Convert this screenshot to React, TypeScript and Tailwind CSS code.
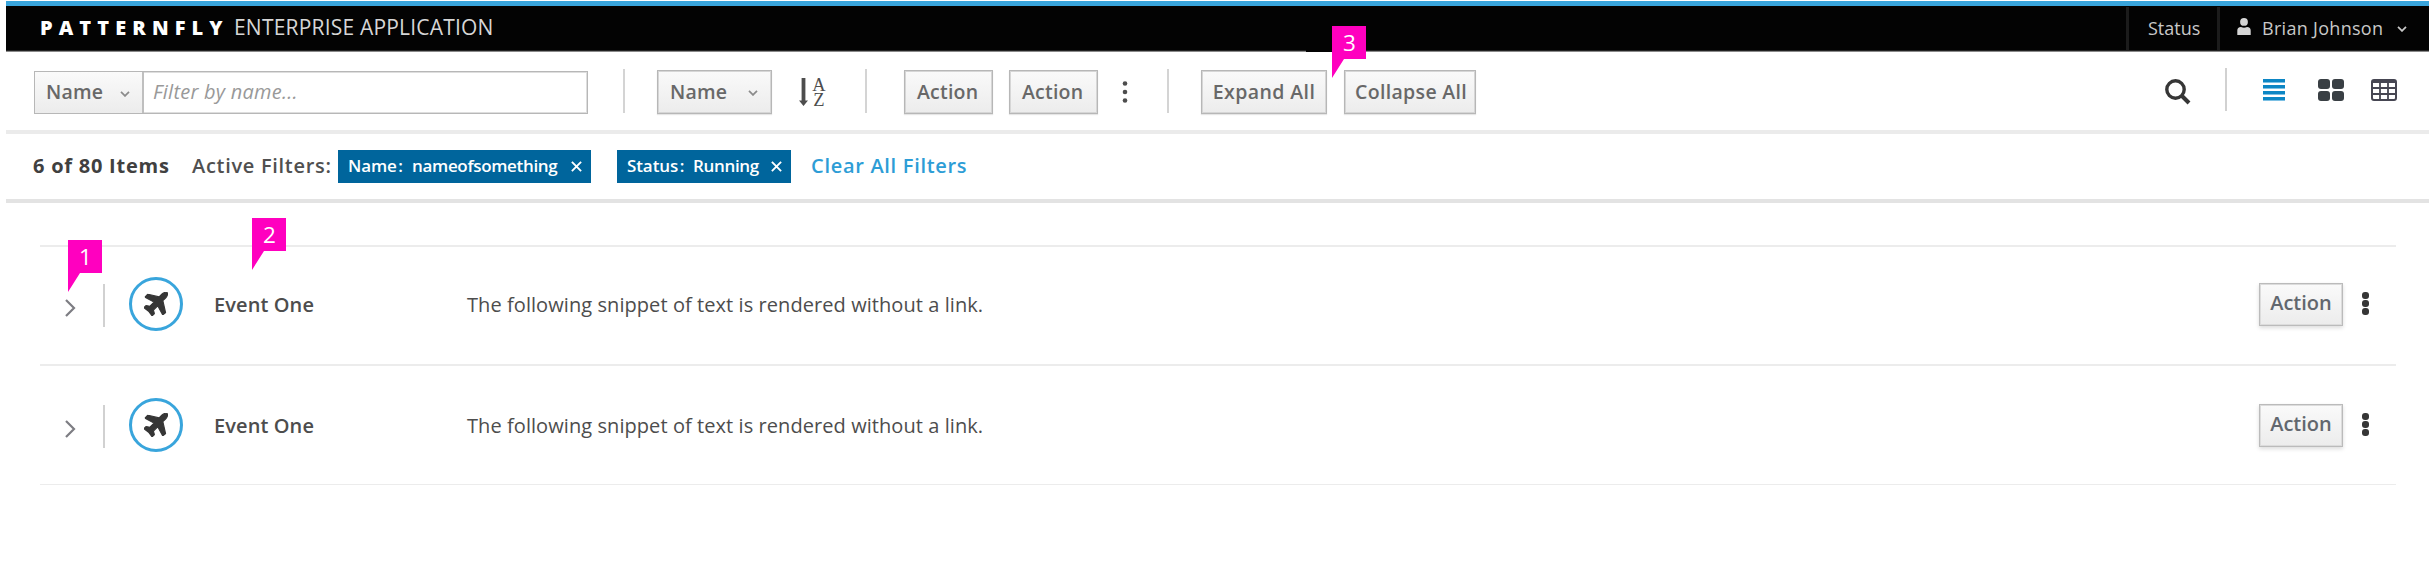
import type { ReactNode } from "react";

function Chevron({ className }: { className?: string }) {
  return (
    <svg viewBox="0 0 10 6" fill="none" stroke="currentColor" strokeWidth="1.7" className={`h-[6px] w-[10px] shrink-0 ${className ?? ""}`}>
      <path d="M1 0.8 5 4.9 9 0.8" />
    </svg>
  );
}

function Kebab({ className }: { className?: string }) {
  return (
    <svg viewBox="0 0 6 22" fill="currentColor" className={`h-[22px] w-[6px] shrink-0 ${className ?? ""}`}>
      <circle cx="3" cy="2.5" r="2.3" />
      <circle cx="3" cy="11" r="2.3" />
      <circle cx="3" cy="19.5" r="2.3" />
    </svg>
  );
}

function ToolButton({ className, children }: { className: string; children: ReactNode }) {
  return (
    <button
      className={`flex h-[44px] shrink-0 items-center border border-[#b7b7b7] bg-linear-to-b from-[#fafafa] to-[#ececec] text-[19.5px] font-semibold whitespace-nowrap text-[#686868] shadow-[inset_0_0_0_1px_#d6d6d6,0_1px_1px_#e6e6e6] ${className}`}
    >
      {children}
    </button>
  );
}

function Divider({ className }: { className: string }) {
  return <div className={`mb-[2px] h-[44px] w-[2px] shrink-0 bg-[#d4d4d4] ${className}`} />;
}

function Callout({ n, className }: { n: number; className: string }) {
  return (
    <div className={`absolute h-[52px] w-[34px] text-white ${className}`}>
      <svg viewBox="0 0 34 52" className="absolute inset-0 h-full w-full" fill="#ff00bf">
        <path d="M0 0H34V33H12L0 52Z" />
      </svg>
      <span className="relative block pl-[1px] text-center text-[22.5px] leading-[33px]">{n}</span>
    </div>
  );
}

function Chip({ label, value, className, labelClassName }: { label: string; value: string; className: string; labelClassName: string }) {
  return (
    <div className={`flex h-[33px] shrink-0 items-center bg-[#00659c] pl-[10px] text-[17px] font-semibold whitespace-nowrap text-white ${className}`}>
      <span className={`mb-[1px] tracking-[-0.1px] ${labelClassName}`}>
        {label}
        <span className="ml-[1.5px]">:</span>
      </span>
      <span className="mb-[1px] tracking-[-0.33px]">{value}</span>
      <svg viewBox="0 0 10 10" className="mr-[9px] mb-[1px] ml-auto h-[11px] w-[11px]" stroke="currentColor" strokeWidth="1.7" fill="none">
        <path d="M0.8 0.8 9.2 9.2M9.2 0.8 0.8 9.2" />
      </svg>
    </div>
  );
}

function Plane() {
  return (
    <svg viewBox="190 120 1420 1440" className="h-[24px] w-[24px]" fill="#363636" stroke="#363636" strokeWidth="70">
      <path d="M1568 160q44 52 12 148t-108 172l-161 161 160 696q5 19-12 33l-128 96q-7 6-19 6-4 0-7-1-15-3-21-16l-279-508-259 259 53 194q5 17-8 31l-96 96q-9 9-23 9h-2q-15-2-24-13l-189-252-252-189q-11-7-13-23-1-13 9-25l96-97q9-9 23-9 6 0 8 1l194 53 259-259-508-279q-14-8-17-24-2-16 9-27l128-128q14-13 30-8l665 159 160-160q76-76 172-108t148 12z" />
    </svg>
  );
}

function EventRow({ className }: { className: string }) {
  return (
    <div className={`flex items-center border-[#ececec] ${className}`}>
      <svg viewBox="0 0 11 18" className="mt-[7px] ml-[25px] h-[18px] w-[11px]" fill="none" stroke="#7d7d83" strokeWidth="2.2">
        <path d="M1 1 9 9 1 17" />
      </svg>
      <div className="mt-[3px] ml-[27px] h-[43px] w-[2px] bg-[#d1d1d1]" />
      <div className="ml-[24px] flex h-[54px] w-[54px] items-center justify-center rounded-full border-[3px] border-[#39a5dc]">
        <Plane />
      </div>
      <span className="mt-[2px] ml-[31px] w-[253px] text-[20px] font-semibold tracking-[0.1px] text-[#4d4d4d]">Event One</span>
      <span className="mt-[2px] text-[20px] tracking-[0.07px] text-[#4d4d4d]">The following snippet of text is rendered without a link.</span>
      <button className="mr-[19px] ml-auto flex h-[43px] w-[84px] items-center justify-center border-[1.5px] border-[#bbbbbb] bg-linear-to-b from-[#fafafa] to-[#ececec] pb-[2px] text-[20px] font-semibold text-[#62676e] shadow-[inset_0_0_0_1px_#dcdcdc,0_2px_4px_#dddddd]">
        Action
      </button>
      <div className="mr-[27px] mb-[2px] flex w-[7px] flex-col gap-[1px]">
        <i className="h-[7px] w-[7px] rounded-[3px] bg-[#363636]" />
        <i className="h-[7px] w-[7px] rounded-[3px] bg-[#363636]" />
        <i className="h-[7px] w-[7px] rounded-[3px] bg-[#363636]" />
      </div>
    </div>
  );
}

export default function App() {
  return (
    <div className="relative h-[575px] w-[2429px] overflow-hidden bg-white pt-[1px] pl-[6px] font-['Open_Sans',sans-serif]">
      <header className="flex h-[51px] border-t-[5px] border-b border-t-[#39a5dc] border-b-[#8a8a8a] bg-[#030303]">
        <div className="flex flex-1 items-center border-b border-[#222222] pl-[34px] whitespace-nowrap">
          <span className="w-[194px] text-[20px] font-extrabold tracking-[6.1px] text-white">PATTERNFLY</span>
          <span className="text-[21px] tracking-[0.2px] text-[#d6d6d6]">ENTERPRISE APPLICATION</span>
        </div>
        <nav className="flex items-center border-b border-[#222222] text-[18px] text-[#c8c8c8]">
          <div className="flex h-[43px] w-[91px] items-center border-l-[3px] border-[#1c1c1c] pl-[19px]">Status</div>
          <div className="flex h-[43px] w-[212px] items-center border-l-[3px] border-[#1c1c1c] pl-[17px]">
            <svg viewBox="0 0 14 17" className="mr-[11px] mb-[3px] h-[17px] w-[14px]" fill="#d6d6d6">
              <ellipse cx="7" cy="3.9" rx="3.9" ry="3.9" />
              <path d="M0.3 17V12.5Q0.3 9.3 4 9Q7 10.5 10 9Q13.7 9.3 13.7 12.5V17Z" />
            </svg>
            <span className="tracking-[0.3px]">Brian Johnson</span>
            <Chevron className="mt-[2px] ml-[14px]" />
          </div>
        </nav>
      </header>

      <div className="flex h-[82px] items-center border-b-[4px] border-[#ebebeb] pt-[2px] pl-[28px]">
        <div className="mt-px flex h-[43px] w-[554px] border border-[#b7b7b7] shadow-[inset_0_0_0_1px_#dedede]">
          <div className="flex w-[109px] items-center border-r-2 border-[#bfbfbf] bg-linear-to-b from-[#fafafa] to-[#ececec] pb-px pl-[11px] text-[19.5px] font-semibold tracking-[0.2px] text-[#686868]">
            Name
            <Chevron className="mt-[3px] ml-[17px] text-[#8b8b8b]" />
          </div>
          <input
            className="w-[400px] bg-transparent pb-px pl-[9px] text-[20px] tracking-[0.25px] italic outline-none placeholder:text-[#999999]"
            placeholder="Filter by name..."
          />
        </div>
        <Divider className="ml-[35px]" />
        <ToolButton className="ml-[32px] w-[115px] pl-[12px] tracking-[0.2px]">
          Name
          <Chevron className="mt-[2px] ml-[21px] text-[#8b8b8b]" />
        </ToolButton>
        <div className="ml-[27px] flex h-[30px] items-center text-[#4d4d4d]">
          <svg viewBox="0 0 9 28" className="h-[28px] w-[9px]" fill="currentColor">
            <path d="M2.6 0H6.4V22.4H9L4.5 28 0 22.4H2.6Z" />
          </svg>
          <div className="mt-[2px] ml-[4px] flex w-[14px] flex-col items-center font-['Liberation_Serif',serif] text-[18.5px] leading-[15.5px]">
            <span>A</span>
            <span>Z</span>
          </div>
        </div>
        <Divider className="ml-[39px]" />
        <ToolButton className="ml-[37px] w-[89px] pl-[12px] tracking-[0.2px]">Action</ToolButton>
        <ToolButton className="ml-[16px] w-[89px] pl-[12px] tracking-[0.2px]">Action</ToolButton>
        <Kebab className="ml-[24px] text-[#4d4d4d]" />
        <Divider className="ml-[39px]" />
        <ToolButton className="ml-[32px] w-[126px] justify-center tracking-[0.4px]">Expand All</ToolButton>
        <ToolButton className="ml-[17px] w-[132px] pl-[10px] tracking-[0.33px]">Collapse All</ToolButton>

        <div className="mr-[32px] mb-[5px] ml-auto flex items-center">
          <svg viewBox="0 0 26 26" className="mt-[4px] h-[26px] w-[26px]" fill="none" stroke="#363636">
            <circle cx="10.5" cy="10.5" r="8.7" strokeWidth="3.4" />
            <path d="M16.5 16.5 24 24" strokeWidth="4" />
          </svg>
          <div className="ml-[34px] h-[43px] w-[2px] bg-[#d1d1d1]" />
          <div className="ml-[36px] flex w-[22px] flex-col gap-[2px]">
            <i className="h-[4px] border-b border-[#7cc0e4] bg-[#0d86c4]" />
            <i className="h-[4px] border-b border-[#7cc0e4] bg-[#0d86c4]" />
            <i className="h-[4px] border-b border-[#7cc0e4] bg-[#0d86c4]" />
            <i className="h-[4px] border-b border-[#7cc0e4] bg-[#0d86c4]" />
          </div>
          <div className="ml-[33px] grid w-[26px] grid-cols-2 gap-[2px]">
            <i className="h-[10px] rounded-[3px] bg-[#393f44]" />
            <i className="h-[10px] rounded-[3px] bg-[#393f44]" />
            <i className="h-[10px] rounded-[3px] bg-[#393f44]" />
            <i className="h-[10px] rounded-[3px] bg-[#393f44]" />
          </div>
          <svg viewBox="0 0 26 22" className="ml-[27px] h-[22px] w-[26px]" fill="none" stroke="#464652">
            <rect x="1" y="1" width="24" height="20" rx="2" strokeWidth="2" />
            <path d="M1 2.5H25" strokeWidth="3" />
            <path d="M1 9H25M1 15H25M9 4V21M17 4V21" strokeWidth="1.8" />
          </svg>
        </div>
      </div>

      <div className="flex h-[69px] items-center border-b-[4px] border-[#e3e3e3] pl-[27px] text-[20px] whitespace-nowrap text-[#404040]">
        <span className="mb-[1px] w-[159px] font-bold tracking-[0.76px]">6 of 80 Items</span>
        <span className="mb-[1px] w-[146px] font-semibold tracking-[0.7px] text-[#505050]">Active Filters:</span>
        <Chip label="Name" value="nameofsomething" className="w-[253px]" labelClassName="w-[64px]" />
        <Chip label="Status" value="Running" className="ml-[26px] w-[174px]" labelClassName="w-[66px]" />
        <a className="mb-[1px] ml-[20px] font-semibold tracking-[0.7px] text-[#2d9dd6]">Clear All Filters</a>
      </div>

      <main className="mt-[42px] mr-[33px] ml-[34px] border-t-[2px] border-[#ececec]">
        <EventRow className="h-[119px] border-b-[2px] pb-[3px]" />
        <EventRow className="h-[119px] border-b" />
      </main>

      <div className="absolute top-[50px] left-[1306px] h-[2px] w-[26px] bg-[#030303]" />
      <Callout n={1} className="top-[240px] left-[68px]" />
      <Callout n={2} className="top-[218px] left-[252px]" />
      <Callout n={3} className="top-[26px] left-[1332px]" />
    </div>
  );
}
